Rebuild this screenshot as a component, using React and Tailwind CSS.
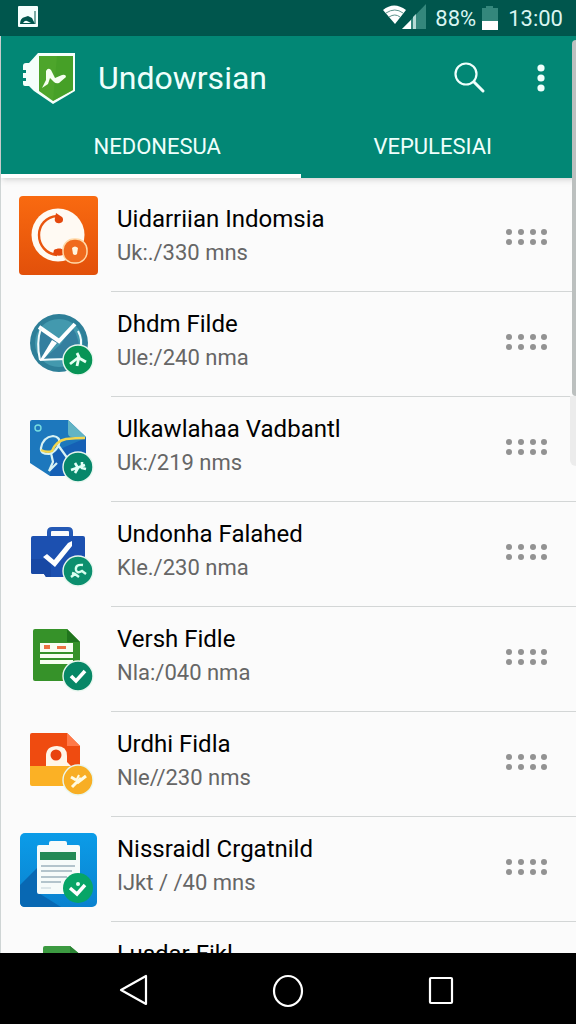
import React, { useState } from 'react';

const TABS = ['NEDONESUA', 'VEPULESIAI'];

const Badge = ({ cy = 60, color = '#0b8f6e', children }) => (
  <g transform={`translate(59 ${cy})`}>
    <circle r="15" fill={color} stroke="#e9f7ef" strokeWidth="1.4" />
    {children}
  </g>
);

const PhoneIcon = () => (
  <>
    <defs>
      <linearGradient id="orange" x1="0" y1="0" x2="0" y2="1">
        <stop offset="0" stopColor="#f96a10" />
        <stop offset="1" stopColor="#e2500a" />
      </linearGradient>
    </defs>
    <rect width="79" height="79" rx="4" fill="url(#orange)" />
    <circle cx="39" cy="39" r="26.5" fill="#fffaf3" />
    <path d="M38 20c-11 1-18 9-18 19s7 19 18 20" fill="none" stroke="#e9560f" strokeWidth="2.4" />
    <path d="M37 17l6 4c2 2 1 6-2 6-4 1-6-2-5-5zM35 54c3-2 8-2 9 0v5c-3 1-7 1-10-1z" fill="#e4480c" />
    <rect x="44" y="43" width="24" height="24" rx="11" fill="#f06a1d" stroke="#ffd9a8" strokeWidth="1.5" />
    <path d="M53 52q3-3 6 0l-1 6q-2 2-4 0z" fill="#fff4df" />
  </>
);

const MailIcon = () => (
  <>
    <circle cx="40" cy="42" r="29" fill="#2e7f98" />
    <circle cx="40" cy="42" r="24" fill="#4399ae" />
    <path d="M22 27q-5 15-1 32l21-20zM53 26q10 14 6 31l-36 2 19-16z" fill="#347f9f" />
    <path d="M20 26l20 14 16-17" fill="none" stroke="#fff" strokeWidth="4" />
    <path d="M22 27q-5 15-1 32M21 59q20-1 32-1M59 30q5 9 2 18" fill="none" stroke="#f1fbfc" strokeWidth="2" />
    <path d="M33 39l-12 20 3 0 14-17z" fill="#fff" />
    <Badge cy={59} color="#079456">
      <path d="M-8 4L1-3M-1-7L1-3-1 6M1-2L8 2" fill="none" stroke="#e6fff2" strokeWidth="2.8" />
    </Badge>
  </>
);

const MapIcon = () => (
  <>
    <path d="M13 14h36l18 17v39H31L11 57V16q0-2 2-2z" fill="#1d78bd" />
    <path d="M34 46l33-14v38H31z" fill="#1560b5" />
    <path d="M49 14l18 17H53q-4 0-4-4z" fill="#62b4c4" />
    <circle cx="19" cy="22" r="3" fill="none" stroke="#77dce0" strokeWidth="1.4" />
    <path d="M22 42q2-11 12-12 8 1 6 8-3 8-10 10-9 0-8-6zM39 39l10 14M32 47l2 9-4 9 8-8" fill="none" stroke="#d8f2f3" strokeWidth="2.2" />
    <path d="M22 44q6 3 11 1 4-10 14-12 9-1 19-1" fill="none" stroke="#f3d64e" strokeWidth="2.4" />
    <Badge cy={61} color="#07876b">
      <path d="M-7 3L7-2M-3-4L0 1-3 6M4-5L4 1 8 2" fill="none" stroke="#e3fff7" strokeWidth="2.6" />
    </Badge>
  </>
);

const BriefcaseIcon = () => (
  <>
    <path d="M30 26v-5q0-3 3-3h16q3 0 3 3v5" fill="none" stroke="#2459b5" strokeWidth="4" />
    <path d="M14 25h50q2 0 2 2v39H27l-2-3H14q-2 0-2-2V27q0-2 2-2z" fill="#1c50b0" />
    <path d="M12 48h20v18h-5l-2-3H14q-2 0-2-2z" fill="#1848a4" />
    <path d="M24 46l4-3 7 6 14-17 4-2v5L36 56z" fill="#fff" />
    <Badge>
      <path d="M5-6Q-3-7-2-1q1 4 6 1l4 3M-7 6l4-3 4 3M-6 2l3 1" fill="none" stroke="#d9fff0" strokeWidth="2.4" />
    </Badge>
  </>
);

const SheetIcon = () => (
  <>
    <path d="M16 13h32l13 13v39H16q-2 0-2-2V15q0-2 2-2z" fill="#369229" />
    <path d="M48 13l13 13H48z" fill="#20741d" />
    <path d="M21 27h33v9H21zM21 38h33v4H21zM21 44h33v4H21z" fill="#f8fff1" />
    <path d="M25 29h6v4h-6zM38 30h9v3h-9z" fill="#ec7441" />
    <Badge color="#078766">
      <path d="M-7 0l5 5 9-10" fill="none" stroke="#fff" strokeWidth="3.6" />
    </Badge>
  </>
);

const PlaceIcon = () => (
  <>
    <path d="M13 12h35l13 13v21H11V14q0-2 2-2z" fill="#ef4b10" />
    <path d="M48 12l13 13H48z" fill="#ff7948" />
    <path d="M11 45h50v20H13q-2 0-2-2z" fill="#fbb125" />
    <path d="M27 45V35q0-10 11-10 10 0 10 10v6l4 4z" fill="#fff6e8" />
    <circle cx="37" cy="34" r="5.5" fill="#e8430f" />
    <Badge cy={59} color="#f8ae24">
      <path d="M-7-3l5 3M-6 7L3-2M-1 3L8-4" fill="none" stroke="#fffbe2" strokeWidth="3" />
      <path d="M-2 1l3-6" fill="none" stroke="#fffbe2" strokeWidth="2" />
    </Badge>
  </>
);

const ClipboardIcon = () => (
  <>
    <defs>
      <linearGradient id="sky" x1="0" y1="0" x2="0" y2="1">
        <stop offset="0" stopColor="#0b9ce8" />
        <stop offset="1" stopColor="#0a82cf" />
      </linearGradient>
    </defs>
    <rect x="1" y="7" width="77" height="74" rx="5" fill="url(#sky)" />
    <path d="M18 42L1 59v17q0 5 5 5h36L18 66z" fill="#0868b3" />
    <path d="M20 19h10v-2q0-2 2-2h14q2 0 2 2v2h11q2 0 2 2v45q0 2-2 2H20q-2 0-2-2V21q0-2 2-2z" fill="#f6fbfa" />
    <path d="M21 26h36v8H21z" fill="#238a56" />
    <path d="M22 40h34M22 45h31M22 51h26M22 56h20" stroke="#718e9d" strokeWidth="1.2" />
    <path d="M22 62h10" stroke="#cbd8dd" strokeWidth="1.2" />
    <g transform="translate(59 62)">
      <circle r="15" fill="#07a567" />
      <path d="M-8 0l7 6 8-9" fill="none" stroke="#fff" strokeWidth="3.4" />
      <circle cx="0" cy="-4" r="2" fill="#e6fff4" />
    </g>
  </>
);

const FileIcon = () => (
  <>
    <path d="M26 15h25l12 10v40H24V17q0-2 2-2z" fill="#3c9a41" />
    <path d="M51 15l12 10H51z" fill="#2b8434" />
  </>
);

const ITEMS = [
  { title: 'Uidarriian Indomsia', detail: 'Uk:./330 mns', Icon: PhoneIcon },
  { title: 'Dhdm Filde', detail: 'Ule:/240 nma', Icon: MailIcon },
  { title: 'Ulkawlahaa Vadbantl', detail: 'Uk:/219 nms', Icon: MapIcon },
  { title: 'Undonha Falahed', detail: 'Kle./230 nma', Icon: BriefcaseIcon },
  { title: 'Versh Fidle', detail: 'Nla:/040 nma', Icon: SheetIcon },
  { title: 'Urdhi Fidla', detail: 'Nle//230 nms', Icon: PlaceIcon },
  { title: 'Nissraidl Crgatnild', detail: 'IJkt / /40 mns', Icon: ClipboardIcon },
  { title: 'Lusdar Fikl', Icon: FileIcon },
];

function StatusBar() {
  return (
    <div className="flex h-9 shrink-0 items-center bg-[#00564d] pr-[13px] pl-4 text-[#d9f5f1]">
      <svg className="h-6 w-6" viewBox="0 0 24 24">
        <rect x="2" y="0" width="20" height="21" rx="1" fill="#f4fffd" />
        <path d="M4 18q0-6 5-7l3-1 4 2 3 6z" fill="#00564d" />
        <path d="M7 17q2-3 4-2l4 2z" fill="#f4fffd" />
        <path d="M19 5v13" stroke="#00564d" />
      </svg>
      <div className="ml-auto flex items-center">
        <svg className="h-7 w-11" viewBox="0 0 44 28">
          <path d="M0 6q11-9 23 0L12 20z" fill="#fff" />
          <path d="M3 9q9-6 17 0M6 13q6-4 11 0" fill="none" stroke="#5b928b" strokeWidth="1" />
          <path d="M43 0v25H19z" fill="#34877c" />
          <path d="M28 16v9h-9z" fill="#fff" />
          <path d="M30 13l3-3v15h-3z" fill="#b5dad5" />
        </svg>
        <span className="ml-2 text-[22px]">88%</span>
        <svg className="ml-1 h-7 w-5" viewBox="0 0 20 28">
          <path d="M2 4h4V2h7v2h5v13H2z" fill="#34877c" />
          <path d="M2 17h16v9H2z" fill="#fff" />
        </svg>
        <span className="ml-2 text-[22px]">13:00</span>
      </div>
    </div>
  );
}

function Logo() {
  return (
    <svg className="h-14 w-14" viewBox="0 0 56 56">
      <path d="M17 3h37v38L32 54 13 41 8 36H4q-2 0-2-2v-3h3v-3H2v-5h3v-3H2v-4q0-3 3-3h3z" fill="#f5fffb" />
      <path d="M18 6h34v34L32 51 18 41z" fill="#4da52b" />
      <path d="M36 6h16v34L32 51z" fill="#439c25" opacity="0.6" />
      <path d="M21 38l4-8V21q2-4 5-1l4 8 7-3q4-1 4 2l-7 6q-3 1-5-1l-4-4-2 6z" fill="#f5fff0" />
    </svg>
  );
}

function ListItem({ title, detail, Icon }) {
  return (
    <li className="flex h-[105px] shrink-0 pl-[18px]">
      <svg className="mt-[9px] h-[84px] w-20 shrink-0" viewBox="0 0 80 84">
        <Icon />
      </svg>
      <div className="ml-3 flex min-w-0 flex-1 items-start border-b border-[#d3d6d6] pt-4 pl-[6px]">
        <div className="min-w-0 flex-1 whitespace-nowrap">
          <h2 className="text-2xl leading-[33px] text-black">{title}</h2>
          {detail && <p className="text-[22px] leading-[33px] text-[#666]">{detail}</p>}
        </div>
        <button type="button" aria-label={`Move ${title}`} className="mt-6 mr-[26px] shrink-0">
          <svg className="h-5 w-11" viewBox="0 0 44 20" fill="#929292">
            {[3, 15, 27, 38].map((x) => (
              <g key={x}>
                <circle cx={x} cy="5" r="3" />
                <circle cx={x} cy="15" r="3" />
              </g>
            ))}
          </svg>
        </button>
      </div>
    </li>
  );
}

function NavBar() {
  return (
    <nav className="flex h-[71px] shrink-0 items-center justify-center gap-[113px] bg-black">
      <button type="button" aria-label="Back">
        <svg className="h-10 w-10" viewBox="0 0 40 40" fill="none" stroke="#fff" strokeWidth="2.2" strokeLinejoin="round">
          <path d="M31 7v28L6 21z" />
        </svg>
      </button>
      <button type="button" aria-label="Home">
        <svg className="h-10 w-10" viewBox="0 0 40 40" fill="none" stroke="#fff" strokeWidth="2.2">
          <ellipse cx="20" cy="22" rx="14" ry="15" />
        </svg>
      </button>
      <button type="button" aria-label="Recent apps">
        <svg className="h-10 w-10" viewBox="0 0 40 40" fill="none" stroke="#fff" strokeWidth="2.2">
          <rect x="9" y="9" width="22" height="25" rx="1" />
        </svg>
      </button>
    </nav>
  );
}

export default function App() {
  const [activeTab, setActiveTab] = useState(0);

  return (
    <div className="flex h-screen flex-col overflow-hidden bg-[#fbfbfb] font-[Roboto,sans-serif]">
      <StatusBar />
      <div className="relative flex min-h-0 flex-1 flex-col border-l border-[#cfd5d5]">
        <header className="z-10 shrink-0 bg-[#028775] text-[#effffc] shadow-md">
          <div className="flex h-[84px] items-center pr-6 pl-5">
            <Logo />
            <h1 className="ml-[21px] text-[32px]">Undowrsian</h1>
            <button type="button" aria-label="Search" className="ml-auto">
              <svg className="h-9 w-9" viewBox="0 0 36 36" fill="none" stroke="currentColor" strokeLinecap="round">
                <circle cx="14" cy="14" r="10.5" strokeWidth="2.2" />
                <path d="M22 22l9 9" strokeWidth="3" />
              </svg>
            </button>
            <button type="button" aria-label="More options" className="ml-10">
              <svg className="h-9 w-6" viewBox="0 0 24 36" fill="currentColor">
                <circle cx="13" cy="8" r="3.6" />
                <circle cx="13" cy="18" r="3.6" />
                <circle cx="13" cy="28" r="3.6" />
              </svg>
            </button>
          </div>
          <div role="tablist" className="grid h-[58px] grid-cols-[301fr_275fr]">
            {TABS.map((tab, i) => (
              <button
                key={tab}
                type="button"
                role="tab"
                aria-selected={activeTab === i}
                onClick={() => setActiveTab(i)}
                className={`border-b-4 pb-[2px] text-[22px] ${i === 0 ? 'pl-3' : 'pr-3'} ${activeTab === i ? 'border-white' : 'border-transparent'}`}
              >
                {tab}
              </button>
            ))}
          </div>
        </header>
        <ul className="flex min-h-0 flex-1 flex-col overflow-hidden pt-[9px]">
          {ITEMS.map((item) => (
            <ListItem key={item.title} {...item} />
          ))}
        </ul>
        <div className="absolute top-[360px] right-0 h-[70px] w-[6px] rounded-bl-md bg-[#ececec]" />
        <div className="absolute top-1 right-0 z-20 h-[356px] w-1 rounded-l-sm bg-[#bcc0bf]" />
      </div>
      <NavBar />
    </div>
  );
}
